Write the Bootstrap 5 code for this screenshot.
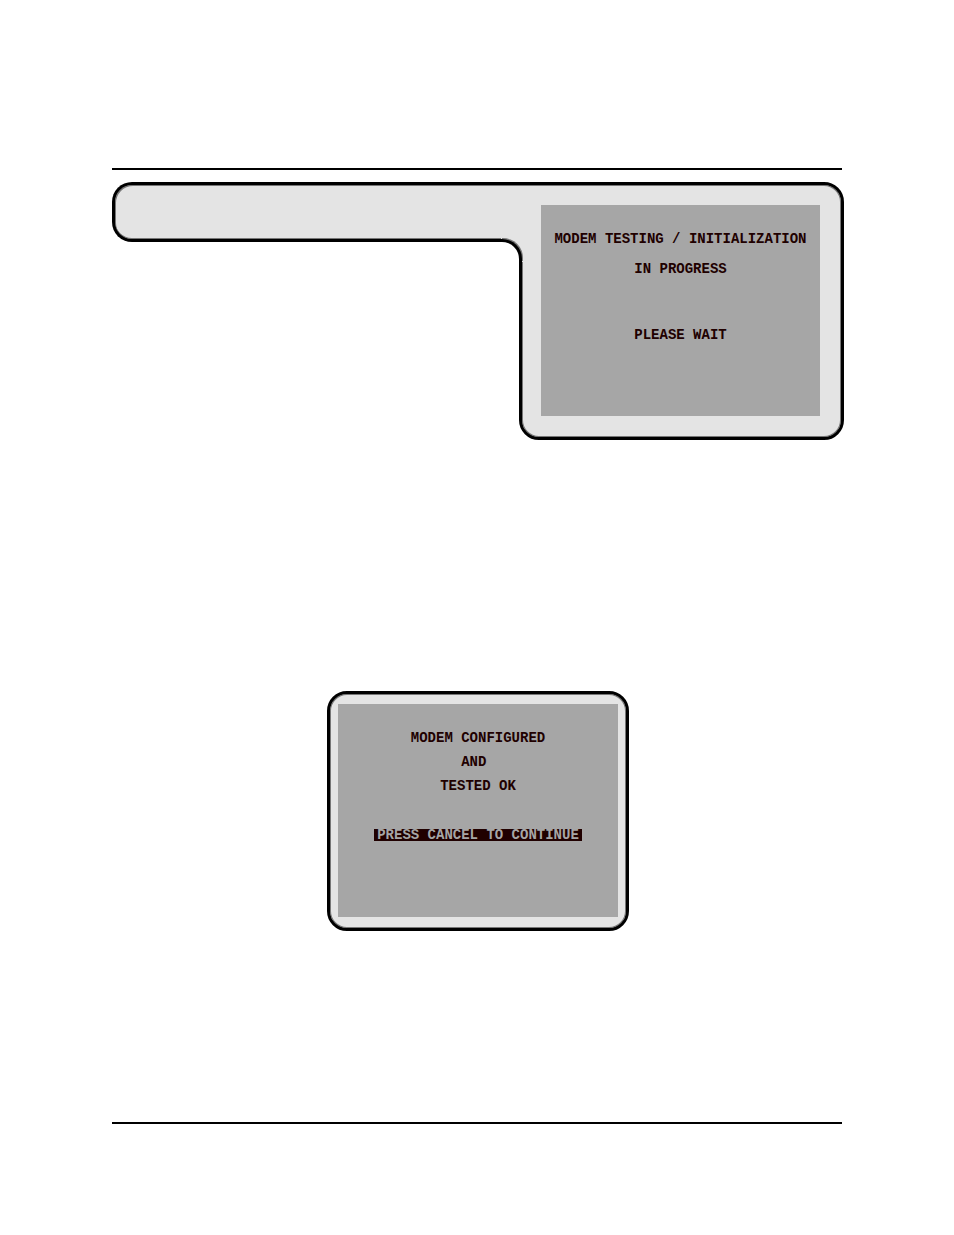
<!DOCTYPE html>
<html lang="en">
<head>
<meta charset="utf-8">
<meta name="viewport" content="width=device-width, initial-scale=1">
<title>Modem testing</title>
<link rel="stylesheet" href="https://cdn.jsdelivr.net/npm/bootstrap@5.3.0/dist/css/bootstrap.min.css">
<style>
  body { background: #fff; }
  .sheet { padding: 168px 112px 96px; }
  .rule { border-top: 2px solid #000; opacity: 1; color: #000; }
  .figures { margin-right: -2px; }
  /* tab-shaped frame: a title arm joined to the display housing */
  .arm { height: 60px; background: #e4e4e4; border: 3px solid #000; border-right: 0; border-radius: 20px 0 0 20px; box-shadow: inset 1px 1px 0 #777, inset 0 -1px 0 #777; }
  .joint { width: 22px; height: 80px; margin-right: -4px; padding: 54px 1px 0 0; background: #e4e4e4; border-top: 3px solid #000; box-shadow: inset 0 1px 0 #777; z-index: 1; }
  .joint-curve { height: 23px; border: solid #000; border-width: 3px 3px 0 0; border-radius: 0 20px 0 0; background: #fff; box-shadow: 1px -1px 0 #777; }
  .housing { background: #e4e4e4; border: 3px solid #000; border-radius: 20px; box-shadow: inset 0 0 0 1px #777; }
  .housing-main { width: 325px; padding: 20px 21px 21px 19px; border-top-left-radius: 0; }
  .housing-small { width: 302px; padding: 10px 8px 11px; }
  .lcd { background: #a6a6a6; color: #200000; font: bold 14px "Liberation Mono", monospace; text-align: center; white-space: pre; }
  .lcd p { margin: 0; }
  .lcd-main { height: 211px; padding-top: 19px; line-height: 30px; }
  .lcd-small { height: 213px; padding-top: 22px; line-height: 24px; }
  .wait { padding-top: 36px; }
  .prompt { padding-top: 25px; }
  .prompt span { display: inline-block; line-height: 12px; padding: 0 3px; background: #200000; color: #a6a6a6; }
  .second { margin-top: 251px; }
  .closing { margin-top: 191px; }
</style>
</head>
<body>
<main class="sheet">
  <hr class="rule m-0">
  <div class="figures">
    <section class="d-flex align-items-start mt-2 pt-1">
      <div class="arm flex-grow-1"></div>
      <div class="joint flex-shrink-0"><div class="joint-curve"></div></div>
      <div class="housing housing-main flex-shrink-0">
        <div class="lcd lcd-main"><p>MODEM TESTING / INITIALIZATION</p><p>IN PROGRESS</p><p class="wait">PLEASE WAIT</p></div>
      </div>
    </section>
    <section class="second d-flex justify-content-center">
      <div class="housing housing-small">
        <div class="lcd lcd-small"><p>MODEM CONFIGURED</p><p>AND </p><p>TESTED OK</p><p class="prompt"><span>PRESS CANCEL TO CONTINUE</span></p></div>
      </div>
    </section>
  </div>
  <hr class="rule closing mb-0">
</main>
<script src="https://cdn.jsdelivr.net/npm/bootstrap@5.3.0/dist/js/bootstrap.bundle.min.js"></script>
</body>
</html>
